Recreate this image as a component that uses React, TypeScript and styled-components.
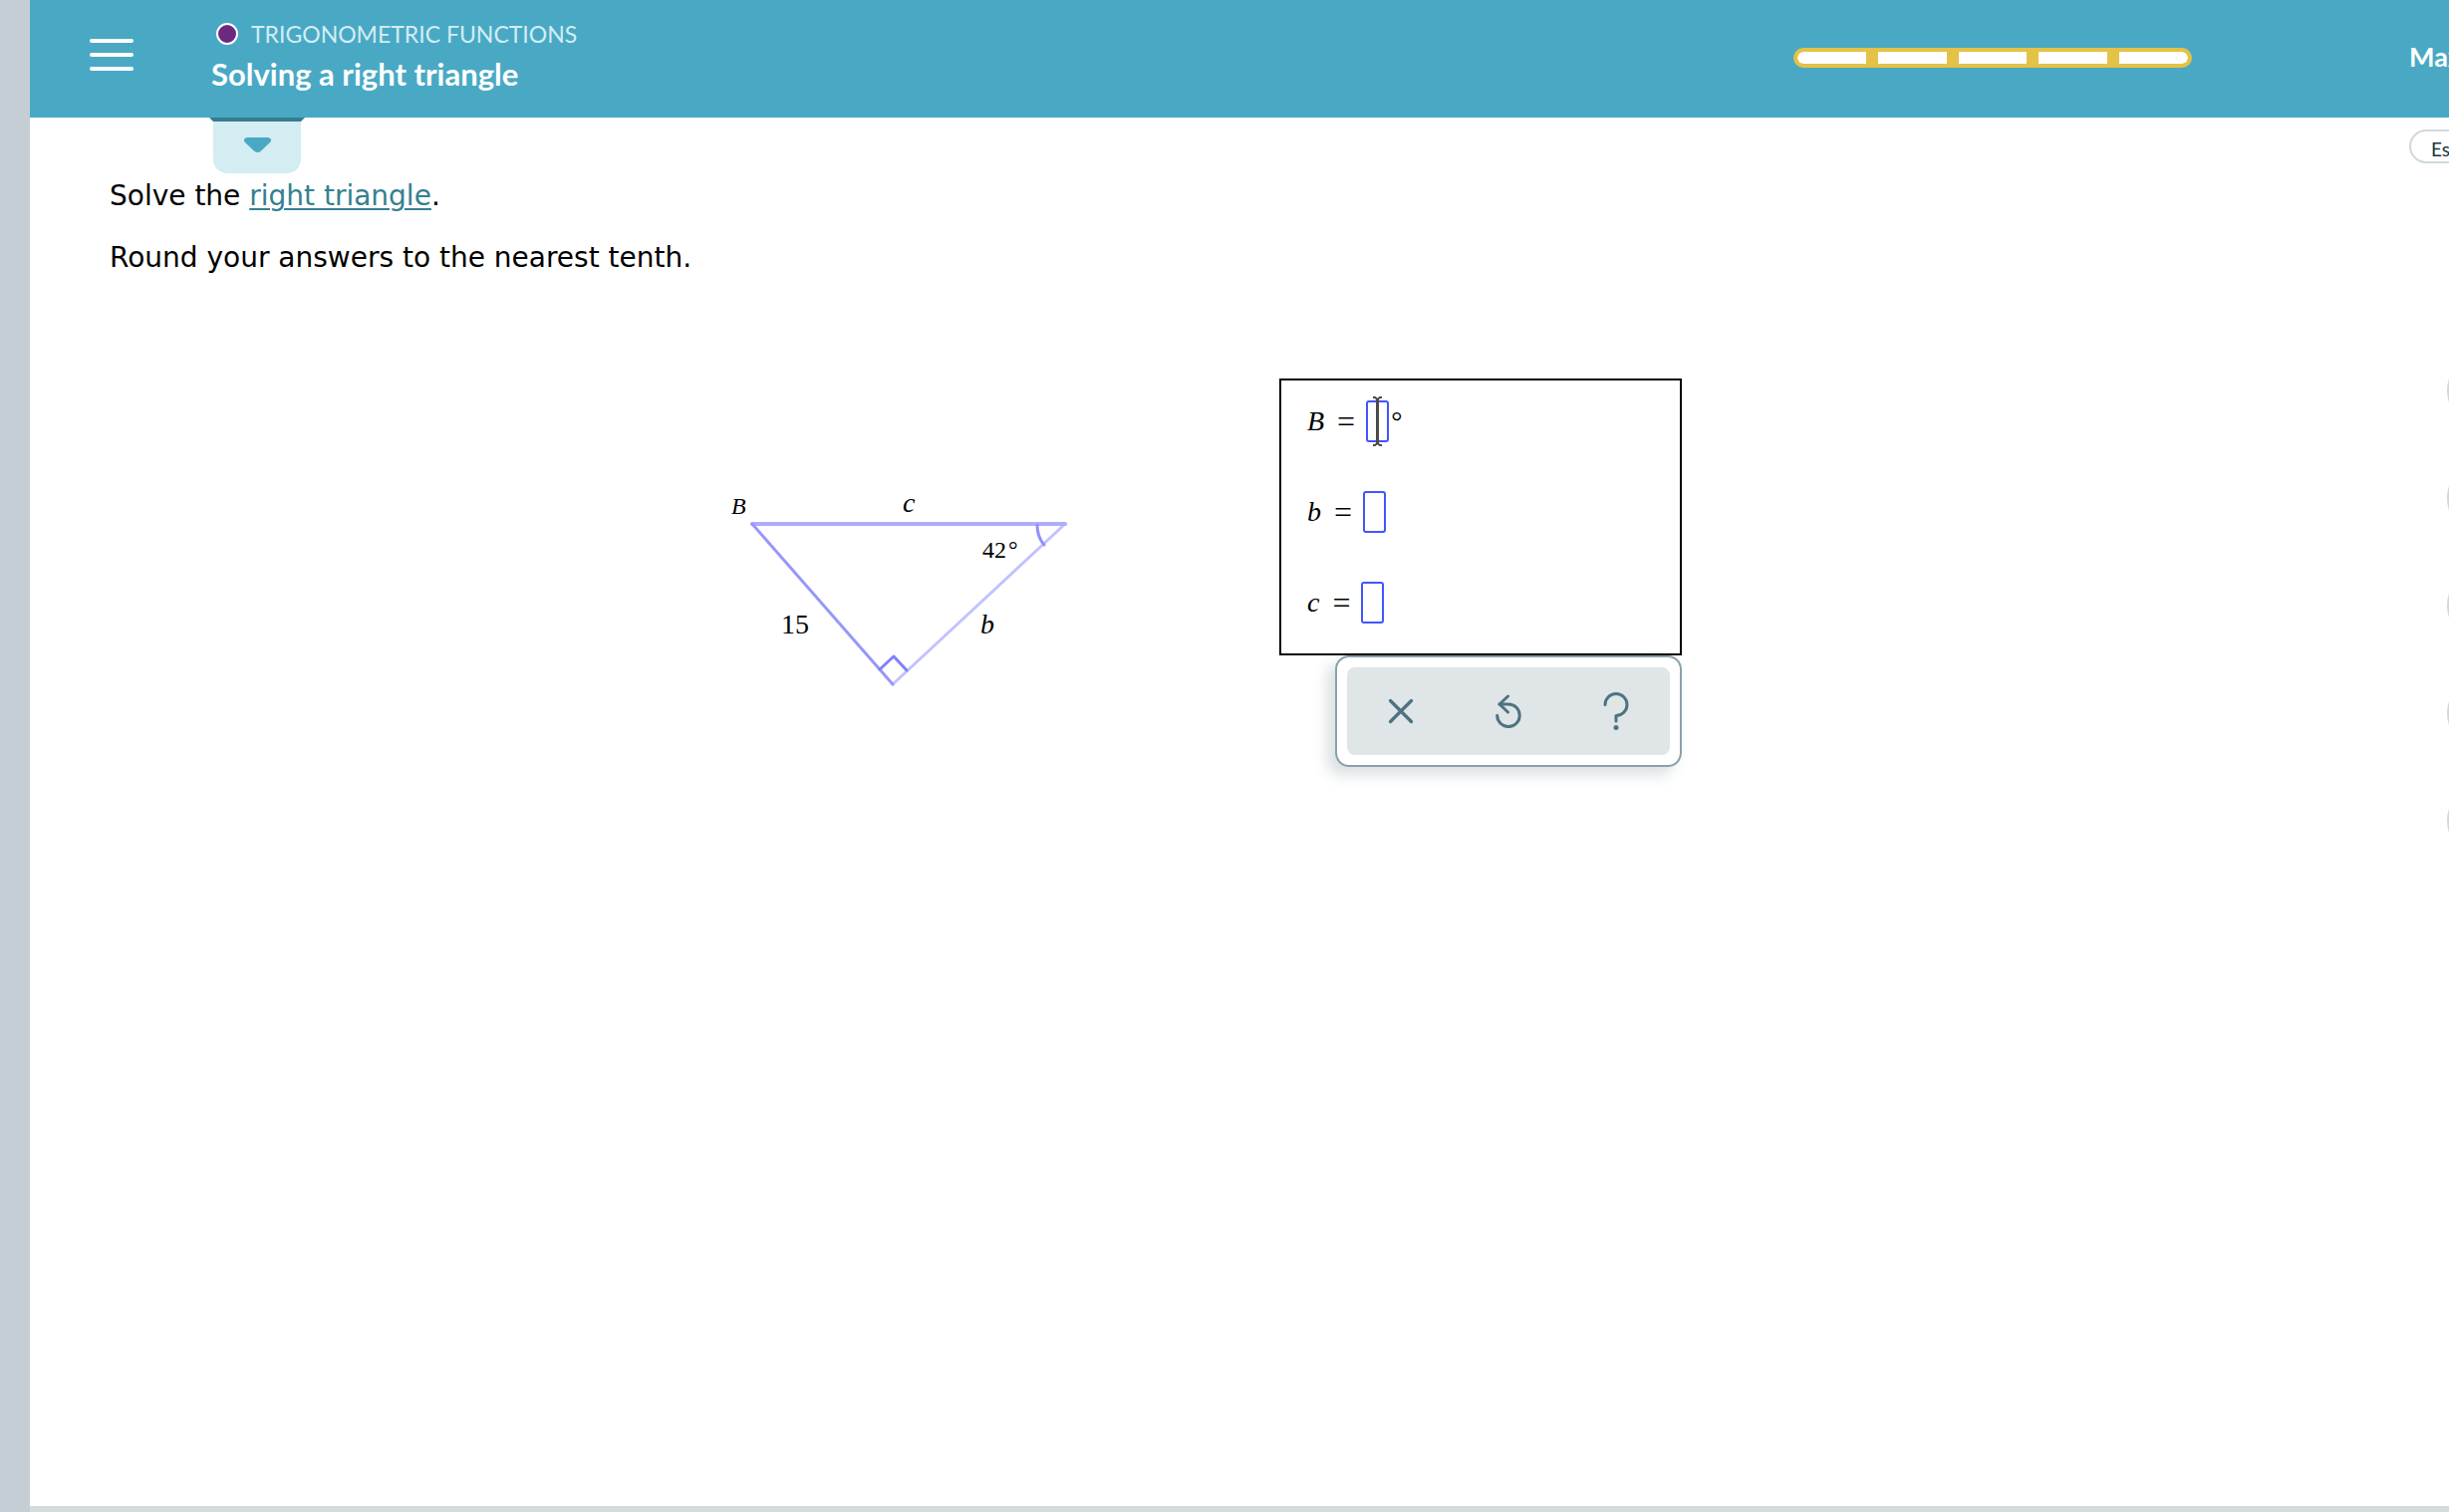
import React from "react";
import styled, { createGlobalStyle, css } from "styled-components";

const GlobalStyle = createGlobalStyle`
  *, *::before, *::after { box-sizing: border-box; }
  body { margin: 0; background: #ffffff; }
  button, input { font: inherit; margin: 0; padding: 0; }
  h1, p { margin: 0; font-weight: inherit; }
`;

const ui = `Lato, "Liberation Sans", sans-serif`;
const reading = `"DejaVu Sans", Verdana, sans-serif`;
const math = `"Liberation Serif", "Times New Roman", serif`;

const Page = styled.div`
  display: grid;
  grid-template-columns: 30px minmax(0, 1fr);
  min-height: 100vh;
  overflow: hidden;
`;

const Rail = styled.div`
  background: #c4ced4;
`;

const Sheet = styled.div`
  display: flex;
  flex-direction: column;
  border-bottom: 6px solid #d3dbdd;
`;

const Header = styled.header`
  display: flex;
  align-items: center;
  height: 118px;
  padding-left: 60px;
  background: #49a9c5;
  color: #ffffff;
  font-family: ${ui};
`;

const MenuButton = styled.button`
  display: flex;
  flex-direction: column;
  gap: 10px;
  width: 44px;
  margin-bottom: 8px;
  border: 0;
  background: none;
`;

const MenuLine = styled.span`
  height: 4px;
  border-radius: 2px;
  background: #ffffff;
`;

const Titles = styled.div`
  flex: 1;
  height: 100%;
  margin-left: 78px;
  padding-top: 18px;
`;

const Topic = styled.div`
  display: flex;
  align-items: center;
  gap: 13px;
  padding-left: 5px;
  font-size: 23px;
  line-height: 32px;
  color: #d3edf2;
`;

const TopicDot = styled.span`
  width: 22px;
  height: 22px;
  border: 2px solid #ffffff;
  border-radius: 50%;
  background: #6b2a7f;
`;

const Title = styled.h1`
  margin-top: 4px;
  font-size: 31px;
  font-weight: 700;
  line-height: 40px;
`;

const Progress = styled.div`
  display: flex;
  gap: 12px;
  width: 400px;
  height: 20px;
  margin: 0 218px 2px 0;
  border: 4px solid #e4c147;
  border-radius: 10px;
  background: #e4c147;
  overflow: hidden;
`;

const Segment = styled.span`
  flex: 1;
  background: #ffffff;

  &:first-child { border-radius: 6px 0 0 6px; }
  &:last-child { border-radius: 0 6px 6px 0; }
`;

const UserName = styled.div`
  width: 40px;
  padding-bottom: 4px;
  font-size: 27px;
  font-weight: 700;
  line-height: 36px;
  white-space: nowrap;
`;

const Body = styled.div`
  display: grid;
  grid-template-columns: minmax(0, 1fr) 40px;
  flex: 1;
`;

const Main = styled.main`
  grid-area: 1 / 1 / 2 / 3;
`;

const TabButton = styled.button`
  display: flex;
  margin-left: 180px;
  border: 0;
  background: none;
`;

const Question = styled.div`
  display: flex;
  flex-direction: column;
  gap: 22px;
  padding: 3px 0 0 80px;
  font-family: ${reading};
  font-size: 28px;
  line-height: 40px;
  color: #000000;
`;

const TermLink = styled.a`
  color: #35808f;
  text-decoration: underline;
  text-decoration-thickness: 2px;
  text-underline-offset: 3px;
`;

const Workspace = styled.div`
  display: grid;
  grid-template-columns: 10fr 345px 209px 404px 11fr;
  margin-top: 101px;
`;

const Figure = styled.svg`
  grid-column: 2;
  margin-top: 110px;
  overflow: visible;
  font-family: ${math};
`;

const AnswerArea = styled.form`
  grid-column: 4;
  display: flex;
  flex-direction: column;
  align-items: flex-end;
`;

const AnswerBox = styled.div`
  display: flex;
  flex-direction: column;
  gap: 49px;
  width: 100%;
  padding: 20px 26px 30px;
  border: 2px solid #000000;
  font-family: ${math};
  font-size: 28px;
`;

const AnswerRow = styled.div`
  display: flex;
  align-items: center;
  height: 42px;
`;

const Variable = styled.label`
  font-style: italic;
`;

const Equals = styled.span`
  margin: 0 11px 0 13px;
  font-size: 32px;
  line-height: 42px;
`;

const Field = styled.div`
  position: relative;
  display: flex;
`;

const AnswerInput = styled.input`
  width: 23px;
  height: 42px;
  border: 2px solid #4255ff;
  border-radius: 3px;
  background: #ffffff;
  text-align: center;
  outline: none;
`;

const TextPointer = styled.svg`
  position: absolute;
  left: 6px;
  top: -5px;
`;

const Degree = styled.span`
  margin-left: 2px;
`;

const Toolbar = styled.div`
  width: 348px;
  padding: 10px;
  border: 2px solid #8aa1ac;
  border-radius: 14px;
  background: #ffffff;
  box-shadow: -8px 8px 14px rgba(90, 115, 125, 0.22);
`;

const ToolbarButtons = styled.div`
  display: grid;
  grid-template-columns: repeat(3, 1fr);
  height: 88px;
  border-radius: 8px;
  background: #e0e5e8;
`;

const ToolButton = styled.button`
  display: flex;
  align-items: center;
  justify-content: center;
  border: 0;
  background: none;
  color: #4d7380;
`;

const SideTools = styled.aside`
  grid-area: 1 / 2 / 2 / 3;
  display: flex;
  flex-direction: column;
  align-items: flex-start;
  z-index: 1;
`;

const outlined = css`
  flex-shrink: 0;
  border: 2px solid #d0d8dd;
  background: #ffffff;
`;

const LanguageButton = styled.button`
  ${outlined}
  height: 34px;
  margin-top: 12px;
  padding: 4px 20px 0;
  border-radius: 17px;
  font-family: ${ui};
  font-size: 19px;
  line-height: 28px;
  color: #163743;
`;

const RoundTools = styled.div`
  display: flex;
  flex-direction: column;
  gap: 34px;
  margin: 191px 0 0 38px;
`;

const RoundButton = styled.button`
  ${outlined}
  width: 74px;
  height: 74px;
  border-radius: 50%;
`;

const variables = [
  { name: "B", degree: true },
  { name: "b", degree: false },
  { name: "c", degree: false },
];

const sideTools = ["Explanation", "Calculator", "Reference", "Dictionary", "Message"];

function Triangle() {
  return (
    <Figure width="345" height="202" viewBox="730 490 345 202" role="img" aria-label="Right triangle">
      <g fill="none" strokeLinecap="round" strokeLinejoin="round">
        <path d="M1069 526L896 687" stroke="#c2c2ff" strokeWidth="3" />
        <path d="M755 526H1069" stroke="#adadfc" strokeWidth="4" />
        <path d="M755 526L896 687" stroke="#9797fb" strokeWidth="3" />
        <path d="M1041 527Q1041 539 1048 547" stroke="#9090fb" strokeWidth="3" />
        <path d="M883 672L897 659L910 673" stroke="#8080fb" strokeWidth="3" />
      </g>
      <g fill="#000000" fontSize="28">
        <text x="734" y="516" fontSize="24" fontStyle="italic">B</text>
        <text x="906" y="514" fontStyle="italic">c</text>
        <text x="986" y="560" fontSize="24">42</text>
        <text x="1012" y="560" fontSize="24">°</text>
        <text x="784" y="636">15</text>
        <text x="984" y="636" fontStyle="italic">b</text>
      </g>
    </Figure>
  );
}

export default function App() {
  return (
    <>
      <GlobalStyle />
      <Page>
        <Rail />
        <Sheet>
          <Header>
            <MenuButton type="button" aria-label="Menu">
              <MenuLine />
              <MenuLine />
              <MenuLine />
            </MenuButton>
            <Titles>
              <Topic>
                <TopicDot />
                TRIGONOMETRIC FUNCTIONS
              </Topic>
              <Title>Solving a right triangle</Title>
            </Titles>
            <Progress role="progressbar" aria-label="Progress">
              {[1, 2, 3, 4, 5].map((step) => (
                <Segment key={step} />
              ))}
            </Progress>
            <UserName>Max</UserName>
          </Header>
          <Body>
            <Main>
              <TabButton type="button" aria-label="Show topic details">
                <svg width="96" height="56" viewBox="0 0 96 56">
                  <path d="M4 0H92V40Q92 56 76 56H20Q4 56 4 40Z" fill="#d3edf2" />
                  <path d="M0 0H96L92 4H4Z" fill="#357d8e" />
                  <path d="M38 20H59Q64 21 61 25L51.500 34Q48.500 36 45.500 34L36 25Q33 21 38 20Z" fill="#49a9c5" />
                </svg>
              </TabButton>
              <Question>
                <p>
                  Solve the <TermLink href="#right-triangle">right triangle</TermLink>.
                </p>
                <p>Round your answers to the nearest tenth.</p>
              </Question>
              <Workspace>
                <Triangle />
                <AnswerArea>
                  <AnswerBox>
                    {variables.map(({ name, degree }, index) => (
                      <AnswerRow key={name}>
                        <Variable htmlFor={`answer-${index}`}>{name}</Variable>
                        <Equals>=</Equals>
                        <Field>
                          <AnswerInput id={`answer-${index}`} type="text" />
                          {degree && (
                            <TextPointer width="11" height="52" viewBox="0 0 11 52" fill="none" stroke="#4a4a4a" strokeWidth="2">
                              <path d="M1 2H3L5.500 4L8 2H10M1 50H3L5.500 48L8 50H10" />
                              <path d="M5.500 4V48" strokeWidth="3" />
                            </TextPointer>
                          )}
                        </Field>
                        {degree && <Degree>°</Degree>}
                      </AnswerRow>
                    ))}
                  </AnswerBox>
                  <Toolbar>
                    <ToolbarButtons>
                      <ToolButton type="button" aria-label="Clear">
                        <svg width="26" height="26" viewBox="0 0 26 26" fill="none" stroke="currentColor" strokeWidth="3.300" strokeLinecap="round">
                          <path d="M2.500 2.500L23.500 23.500M23.500 2.500L2.500 23.500" />
                        </svg>
                      </ToolButton>
                      <ToolButton type="button" aria-label="Undo">
                        <svg width="28" height="34" viewBox="0 0 28 34" fill="none" stroke="currentColor" strokeWidth="3" strokeLinecap="round" strokeLinejoin="round">
                          <path d="M13.500 2L5 10L13.500 18" />
                          <path d="M5 10H14A11.300 11.300 0 1 1 2.700 21.300" />
                        </svg>
                      </ToolButton>
                      <ToolButton type="button" aria-label="Help">
                        <svg width="28" height="40" viewBox="0 0 28 40" fill="none" stroke="currentColor" strokeWidth="3" strokeLinecap="round" strokeLinejoin="round">
                          <path d="M3 13.500A11 11 0 1 1 14 24.500V30" />
                          <circle cx="14" cy="36.500" r="2.500" fill="currentColor" stroke="none" />
                        </svg>
                      </ToolButton>
                    </ToolbarButtons>
                  </Toolbar>
                </AnswerArea>
              </Workspace>
            </Main>
            <SideTools>
              <LanguageButton type="button">Español</LanguageButton>
              <RoundTools>
                {sideTools.map((tool) => (
                  <RoundButton key={tool} type="button" aria-label={tool} />
                ))}
              </RoundTools>
            </SideTools>
          </Body>
        </Sheet>
      </Page>
    </>
  );
}
